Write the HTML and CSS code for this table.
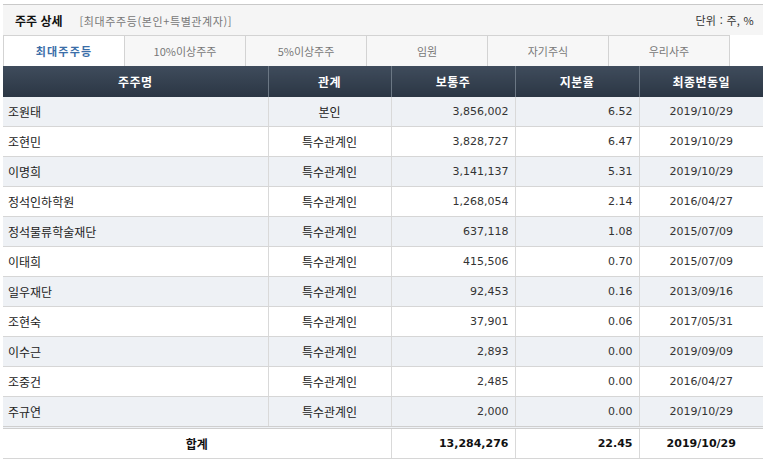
FILE: index.html
```html
<!DOCTYPE html>
<html lang="ko">
<head>
<meta charset="utf-8">
<title>주주 상세</title>
<link rel="stylesheet" href="styles.css">
</head>
<body>
<div class="wrap">
  <div class="titlebar">
    <div class="title"><strong>주주 상세</strong><span class="sub">[최대주주등(본인+특별관계자)]</span></div>
    <div class="unit">단위 : 주, %</div>
  </div>
  <div class="tabs">
    <div class="tab active">최대주주등</div>
    <div class="tab">10%이상주주</div>
    <div class="tab">5%이상주주</div>
    <div class="tab">임원</div>
    <div class="tab">자기주식</div>
    <div class="tab">우리사주</div>
  </div>
  <table class="grid">
    <colgroup>
      <col class="c1"><col class="c2"><col class="c3"><col class="c4"><col class="c5">
    </colgroup>
    <thead>
      <tr><th>주주명</th><th>관계</th><th>보통주</th><th>지분율</th><th>최종변동일</th></tr>
    </thead>
    <tbody>
      <tr class="odd"><td class="name">조원태</td><td class="rel">본인</td><td class="num">3,856,002</td><td class="num">6.52</td><td class="date">2019/10/29</td></tr>
      <tr><td class="name">조현민</td><td class="rel">특수관계인</td><td class="num">3,828,727</td><td class="num">6.47</td><td class="date">2019/10/29</td></tr>
      <tr class="odd"><td class="name">이명희</td><td class="rel">특수관계인</td><td class="num">3,141,137</td><td class="num">5.31</td><td class="date">2019/10/29</td></tr>
      <tr><td class="name">정석인하학원</td><td class="rel">특수관계인</td><td class="num">1,268,054</td><td class="num">2.14</td><td class="date">2016/04/27</td></tr>
      <tr class="odd"><td class="name">정석물류학술재단</td><td class="rel">특수관계인</td><td class="num">637,118</td><td class="num">1.08</td><td class="date">2015/07/09</td></tr>
      <tr><td class="name">이태희</td><td class="rel">특수관계인</td><td class="num">415,506</td><td class="num">0.70</td><td class="date">2015/07/09</td></tr>
      <tr class="odd"><td class="name">일우재단</td><td class="rel">특수관계인</td><td class="num">92,453</td><td class="num">0.16</td><td class="date">2013/09/16</td></tr>
      <tr><td class="name">조현숙</td><td class="rel">특수관계인</td><td class="num">37,901</td><td class="num">0.06</td><td class="date">2017/05/31</td></tr>
      <tr class="odd"><td class="name">이수근</td><td class="rel">특수관계인</td><td class="num">2,893</td><td class="num">0.00</td><td class="date">2019/09/09</td></tr>
      <tr><td class="name">조중건</td><td class="rel">특수관계인</td><td class="num">2,485</td><td class="num">0.00</td><td class="date">2016/04/27</td></tr>
      <tr class="odd"><td class="name">주규연</td><td class="rel">특수관계인</td><td class="num">2,000</td><td class="num">0.00</td><td class="date">2019/10/29</td></tr>
    </tbody>
    <tfoot>
      <tr><td class="sum-label" colspan="2">합계</td><td class="num b">13,284,276</td><td class="num b">22.45</td><td class="date b">2019/10/29</td></tr>
    </tfoot>
  </table>
</div>
</body>
</html>
```

FILE: styles.css
```css
html, body {
  margin: 0;
  padding: 0;
  background: #ffffff;
}

body {
  font-family: "Noto Sans CJK KR", "DejaVu Sans", sans-serif;
  font-size: 12px;
  color: #222;
}

.wrap {
  margin: 4px 3px 0 3px;
  width: 760px;
}

.titlebar {
  display: flex;
  align-items: center;
  justify-content: space-between;
  height: 30px;
  border-top: 1px solid #c9c9c9;
  background: #f5f5f5;
  padding: 0 9px 0 12px;
}

.title strong {
  font-size: 12px;
  font-weight: bold;
  color: #111;
}

.title .sub {
  margin-left: 17px;
  font-size: 11px;
  letter-spacing: 0.6px;
  color: #777;
}

.unit {
  font-size: 11px;
  letter-spacing: 0.3px;
  color: #333;
}

.tabs {
  display: flex;
  height: 31px;
  background: #fff;
}

.tab {
  width: 120px;
  box-sizing: content-box;
  border-top: 1px solid #d3d3d3;
  border-left: 1px solid #d3d3d3;
  background: #f7f7f7;
  color: #777;
  font-size: 11px;
  display: flex;
  align-items: center;
  justify-content: center;
  height: 30px;
}

.tab:last-child {
  border-right: 1px solid #d3d3d3;
}

.tab.active {
  background: #fff;
  color: #3b6ea8;
  font-weight: bold;
  letter-spacing: 1.2px;
}

.grid {
  width: 760px;
  border-collapse: collapse;
  table-layout: fixed;
}

.c1 { width: 265px; }
.c2 { width: 123px; }
.c3 { width: 124px; }
.c4 { width: 124px; }
.c5 { width: 124px; }

.grid th {
  height: 31px;
  padding: 0;
  background: linear-gradient(#3f4c5c, #2b3644);
  color: #fff;
  font-size: 12px;
  font-weight: bold;
  letter-spacing: 0.5px;
  border-left: 1px solid #6b7784;
}

.grid th:first-child {
  border-left: none;
}

.grid td {
  height: 29px;
  padding: 0;
  border-bottom: 1px solid #d6d6d6;
  border-left: 1px solid #d9d9d9;
}

.grid td:first-child {
  border-left: none;
}

.grid tbody tr.odd td {
  background: #eef1f5;
}

.grid td.name {
  padding-left: 5px;
  color: #222;
}

.grid td.rel {
  text-align: center;
  color: #222;
}

.grid td.num {
  text-align: right;
  padding-right: 6px;
  font-family: "DejaVu Sans", sans-serif;
  font-size: 11px;
  color: #333;
}

.grid td.date {
  text-align: center;
  font-family: "DejaVu Sans", sans-serif;
  font-size: 11px;
  color: #333;
}

.grid tfoot td {
  height: 29px;
  border-top: 3px double #cfcfcf;
  border-bottom: 1px solid #d6d6d6;
  background: #fff;
}

.grid td.sum-label {
  text-align: center;
  font-weight: bold;
  color: #111;
}

.grid td.b {
  font-weight: bold;
  color: #111;
}
```
